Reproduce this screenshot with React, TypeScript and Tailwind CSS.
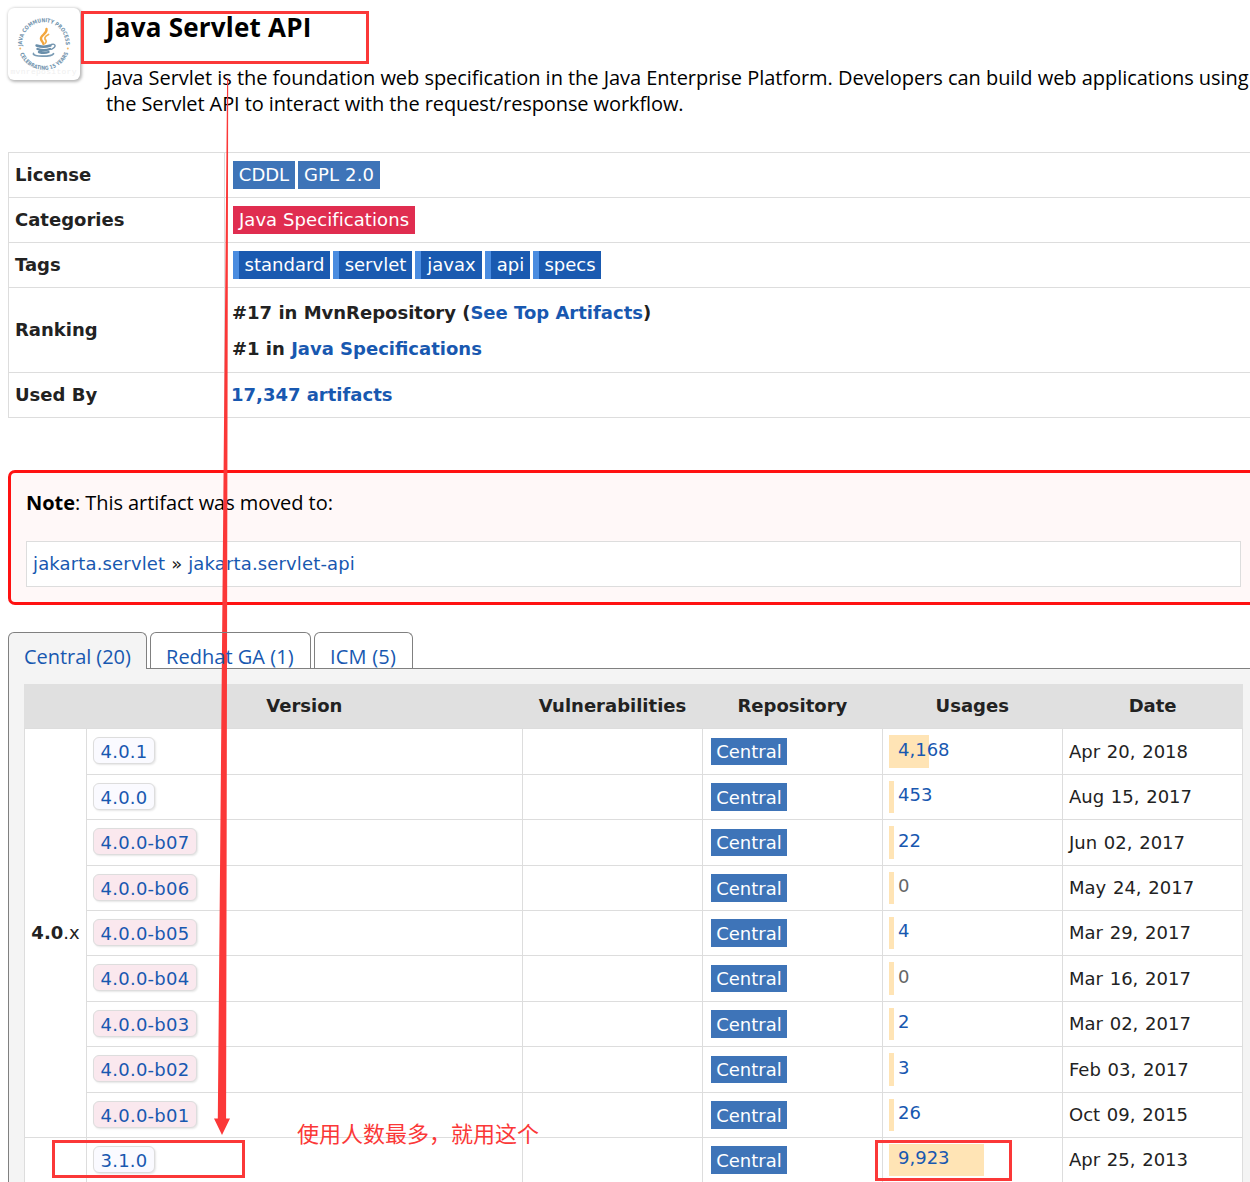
import React from "react";

const VERDANA = "font-['DejaVu_Sans',Verdana,sans-serif]";
const SEGOE = "font-['Open_Sans','Noto_Sans',sans-serif]";

type Release = {
  version: string;
  usages: string;
  bar: number;
  date: string;
  tall: boolean;
};

const releases40: Release[] = [
  { version: "4.0.1", usages: "4,168", bar: 40, date: "Apr 20, 2018", tall: true },
  { version: "4.0.0", usages: "453", bar: 5, date: "Aug 15, 2017", tall: false },
  { version: "4.0.0-b07", usages: "22", bar: 5, date: "Jun 02, 2017", tall: true },
  { version: "4.0.0-b06", usages: "0", bar: 5, date: "May 24, 2017", tall: false },
  { version: "4.0.0-b05", usages: "4", bar: 5, date: "Mar 29, 2017", tall: false },
  { version: "4.0.0-b04", usages: "0", bar: 5, date: "Mar 16, 2017", tall: true },
  { version: "4.0.0-b03", usages: "2", bar: 5, date: "Mar 02, 2017", tall: false },
  { version: "4.0.0-b02", usages: "3", bar: 5, date: "Feb 03, 2017", tall: true },
  { version: "4.0.0-b01", usages: "26", bar: 5, date: "Oct 09, 2015", tall: false },
];

const releases31: Release[] = [
  { version: "3.1.0", usages: "9,923", bar: 95, date: "Apr 25, 2013", tall: false },
];

function Logo() {
  return (
    <div className="h-[72px] w-[72px] shrink-0 rounded-[6px] bg-white shadow-[1px_1px_3px_1px_rgba(0,0,0,0.28)]">
      <svg width="72" height="72" viewBox="0 0 72 72">
        <defs>
          <path id="arcTop" d="M14.200 38 A21.800 21.800 0 1 1 57.600 38" />
          <path id="arcBottom" d="M10.400 41 A26 26 0 0 0 61.400 41" />
        </defs>
        <g fontFamily="DejaVu Sans, sans-serif" fontWeight="700" fontSize="5.500" fill="#7394ae">
          <text>
            <textPath href="#arcTop" textLength="71" lengthAdjust="spacingAndGlyphs">
              JAVA COMMUNITY PROCESS
            </textPath>
          </text>
          <text>
            <textPath href="#arcBottom" startOffset="5" textLength="62" lengthAdjust="spacingAndGlyphs">
              CELEBRATING 15 YEARS
            </textPath>
          </text>
        </g>
        <circle cx="12.200" cy="40.500" r="1" fill="#f5b763" />
        <circle cx="59.800" cy="40.500" r="1" fill="#f5b763" />
        <g fill="none" strokeLinecap="round">
          <path d="M38.500 21c1 5-6.500 6-5.500 10 .3 2 2 3 2.500 5" stroke="#f3a63d" strokeWidth="2.400" />
          <path d="M40.500 26.500c-4 2-4.500 4-2.500 6 .8 1-.2 2-.8 2.800" stroke="#f3b04f" strokeWidth="1.800" />
          <path d="M28.500 37.500c4 1.400 10 1.300 14 0M29.500 41c4 1.500 9 1.400 12.500 0M31 44c3 1 7 1 9.500 0" stroke="#6a8fab" strokeWidth="2.400" />
          <path d="M43.500 36.500c4-1.500 5.500 2.500 0 4.800" stroke="#7394ae" strokeWidth="1.400" />
          <path d="M25.500 45.500c-1.500 3.500 18 3.500 20 .2" stroke="#7a9bb4" strokeWidth="1.700" />
        </g>
        <text x="2.500" y="66" textLength="66" fontFamily="Liberation Mono, monospace" fontSize="8" fill="#efefef">
          mvnrepository
        </text>
      </svg>
    </div>
  );
}

function InfoRow({ label, height, children }: { label: string; height: string; children: React.ReactNode }) {
  return (
    <div className={`flex border-b border-[#dddddd] ${height}`}>
      <div className="flex w-[217px] items-center border-x border-[#dddddd] pb-[2px] pl-[6px] font-bold">{label}</div>
      <div className="flex flex-1 items-center pl-[7px]">{children}</div>
    </div>
  );
}

function Badge({ children, look }: { children: React.ReactNode; look: string }) {
  return (
    <span className={`flex items-center justify-center whitespace-nowrap text-white ${look}`}>
      {children}
    </span>
  );
}

function ReleaseRow({ release }: { release: Release }) {
  const beta = release.version.includes("-b");
  const { tall } = release;
  return (
    <div className={`flex ${tall ? "h-[46px]" : "h-[45px]"}`}>
      <div className="w-[436px] border-r border-b border-[#dddddd] pt-[8px] pl-[6px]">
        <a
          className={`flex h-[27px] items-center justify-center rounded-[6px] border border-[#dddddd] pt-[2px] text-[#1858b0] shadow-[1px_1px_2px_rgba(0,0,0,0.1)] ${
            beta ? "w-[104px] bg-[#fae8ee] tracking-[0.25px]" : "w-[62px] bg-[#fafaff] tracking-[0.2px]"
          }`}
        >
          {release.version}
        </a>
      </div>
      <div className="w-[180px] border-r border-b border-[#dddddd]" />
      <div className={`w-[180px] border-r border-b border-[#dddddd] pl-[8px] ${tall ? "pt-[9px]" : "pt-[8px]"}`}>
        <Badge look={tall ? "bg-[#3e74b8] w-[76px] h-[27px] pb-[1px]" : "bg-[#3e74b8] w-[76px] h-[28px]"}>Central</Badge>
      </div>
      <div className="w-[180px] border-r border-b border-[#dddddd] pt-[6px] pl-[6px]">
        <div className={`bg-[#ffe4b5] ${tall ? "h-[33px]" : "h-[32px]"}`} style={{ width: release.bar }}>
          <span
            className={`block pl-[9px] whitespace-nowrap ${tall ? "leading-[29px]" : "leading-[27px]"} ${
              release.usages === "0" ? "text-[#666666]" : "text-[#1858b0]"
            }`}
          >
            {release.usages}
          </span>
        </div>
      </div>
      <div className={`w-[180px] border-r border-b border-[#dddddd] pl-[6px] [word-spacing:1px] ${tall ? "leading-[45px]" : "leading-[43px]"}`}>
        {release.date}
      </div>
    </div>
  );
}

function ReleaseGroup({ label, releases }: { label: React.ReactNode; releases: Release[] }) {
  return (
    <div className="flex bg-white">
      <div className="flex w-[63px] items-center justify-center border-x border-b border-[#dddddd] pb-[2px]">
        <span>{label}</span>
      </div>
      <div>
        {releases.map((r) => (
          <ReleaseRow key={r.version} release={r} />
        ))}
      </div>
    </div>
  );
}

function Tab({ label, look }: { label: string; look: string }) {
  return (
    <div className={`h-[37px] rounded-t-[6px] border border-b-0 border-[#808080] pl-[15px] pt-[9px] leading-[30px] whitespace-nowrap ${look}`}>
      {label}
    </div>
  );
}

function Annotations() {
  return (
    <>
      <div className="absolute top-[11px] left-[81px] h-[53px] w-[288px] border-[3px] border-[#fb3838]" />
      <div className="absolute top-[1140px] left-[52px] h-[38px] w-[193px] border-[3px] border-[#fb3838]" />
      <div className="absolute top-[1140px] left-[875px] h-[41px] w-[137px] border-[3px] border-[#fb3838]" />
      <svg className="absolute top-0 left-0" width="240" height="1140" fill="#fb3838">
        <path d="M227.100 78H228.200L226.100 1118.500H230L222 1135L214 1118.500H217.800Z" />
      </svg>
      <div className="absolute top-[1116px] left-[297px] text-[22px] leading-[32px] whitespace-nowrap text-[#fb3838] font-['Noto_Sans_CJK_SC',sans-serif]">
        使用人数最多，就用这个
      </div>
    </>
  );
}

export default function App() {
  return (
    <div className={`relative h-[1182px] w-[1250px] overflow-hidden bg-white pl-[8px] text-[18px] text-[#222222] ${VERDANA}`}>
      <header className={`flex h-[152px] pt-[8px] text-black ${SEGOE}`}>
        <Logo />
        <div className="pl-[26px]">
          <h1 className="text-[26px] leading-[38px] font-bold tracking-[0.22px] whitespace-nowrap">Java Servlet API</h1>
          <p className="mt-[19px] text-[20px] leading-[26px] tracking-[-0.04px] whitespace-nowrap">
            Java Servlet is the foundation web specification in the Java Enterprise Platform. Developers can build web applications using
            <br />
            <span className="tracking-[-0.1px]">the Servlet API to interact with the request/response workflow.</span>
          </p>
        </div>
      </header>

      <section className="border-t border-[#dddddd]">
        <InfoRow label="License" height="h-[45px]">
          <div className="flex gap-[3px] pl-[1px]">
            <Badge look="bg-[#3e74b8] w-[62px] h-[28px] pb-[2px]">CDDL</Badge>
            <Badge look="bg-[#3e74b8] w-[82px] h-[28px] pb-[2px] tracking-[0.15px]">GPL 2.0</Badge>
          </div>
        </InfoRow>
        <InfoRow label="Categories" height="h-[45px]">
          <div className="flex pl-[1px]">
            <Badge look="bg-[#e02d50] w-[182px] h-[28px] pb-[2px] tracking-[0.08px]">Java Specifications</Badge>
          </div>
        </InfoRow>
        <InfoRow label="Tags" height="h-[45px]">
          <div className="flex gap-[3px] pl-[1px]">
            <Badge look="bg-[#1a5ab0] border-l-[6px] border-[#4a8ce0] w-[97px] h-[28px] pb-[2px]">standard</Badge>
            <Badge look="bg-[#1a5ab0] border-l-[6px] border-[#4a8ce0] w-[79px] h-[28px] pb-[2px]">servlet</Badge>
            <Badge look="bg-[#1a5ab0] border-l-[6px] border-[#4a8ce0] w-[67px] h-[28px] pb-[2px]">javax</Badge>
            <Badge look="bg-[#1a5ab0] border-l-[6px] border-[#4a8ce0] w-[45px] h-[28px] pb-[2px]">api</Badge>
            <Badge look="bg-[#1a5ab0] border-l-[6px] border-[#4a8ce0] w-[68px] h-[28px] pb-[2px]">specs</Badge>
          </div>
        </InfoRow>
        <InfoRow label="Ranking" height="h-[85px]">
          <div className="pt-[2px] leading-[36px] font-bold whitespace-nowrap">
            <div>
              #17 in MvnRepository (<a className="text-[#1858b0]">See Top Artifacts</a>)
            </div>
            <div>
              #1 in <a className="text-[#1858b0]">Java Specifications</a>
            </div>
          </div>
        </InfoRow>
        <InfoRow label="Used By" height="h-[45px]">
          <a className="-ml-px pb-[2px] font-bold text-[#1858b0]">17,347 artifacts</a>
        </InfoRow>
      </section>

      <section className="mt-[52px] h-[135px] w-[1260px] rounded-[7px] border-[3px] border-[#ff1111] bg-[#fff8f8] pt-[14px] pl-[15px]">
        <p className={`text-[20px] leading-[32px] tracking-[-0.06px] text-black ${SEGOE}`}>
          <b>Note</b>: This artifact was moved to:
        </p>
        <div className="mt-[22px] flex h-[46px] w-[1215px] items-center border border-[#dddddd] bg-white pb-[2px] pl-[6px] tracking-[0.15px] whitespace-pre">
          <a className="text-[#1858b0]">jakarta.servlet</a>
          <span> » </span>
          <a className="text-[#1858b0]">jakarta.servlet-api</a>
        </div>
      </section>

      <nav className={`relative z-10 mt-[27px] flex h-[37px] gap-[3px] text-[20px] text-[#1858b0] ${SEGOE}`}>
        <Tab label="Central (20)" look="w-[139px] bg-[#f4f4f4] tracking-[-0.05px]" />
        <Tab label="Redhat GA (1)" look="w-[161px] tracking-[0.04px]" />
        <Tab label="ICM (5)" look="w-[99px] tracking-[0.2px]" />
      </nav>

      <section className="flex">
        <div className="w-[1242px] border-l border-[#808080] bg-[#f4f4f4] pl-[15px]">
          <div className="-mt-px -ml-[15px] flex h-[16px]">
            <div className="w-[138px]" />
            <div className="h-px flex-1 bg-[#808080]" />
          </div>
          <div className="flex h-[44px] w-[1219px] items-center bg-[#e0e0e0] pb-[2px] text-center font-bold">
            <div className="w-[499px] pl-[62px]">Version</div>
            <div className="w-[180px]">Vulnerabilities</div>
            <div className="w-[180px]">Repository</div>
            <div className="w-[180px]">Usages</div>
            <div className="w-[181px]">Date</div>
          </div>
          <div className="w-[1219px] border-t border-[#dddddd]">
            <ReleaseGroup
              label={
                <>
                  <b>4.0</b>.x
                </>
              }
              releases={releases40}
            />
            <ReleaseGroup label="" releases={releases31} />
          </div>
        </div>
      </section>

      <Annotations />
    </div>
  );
}
